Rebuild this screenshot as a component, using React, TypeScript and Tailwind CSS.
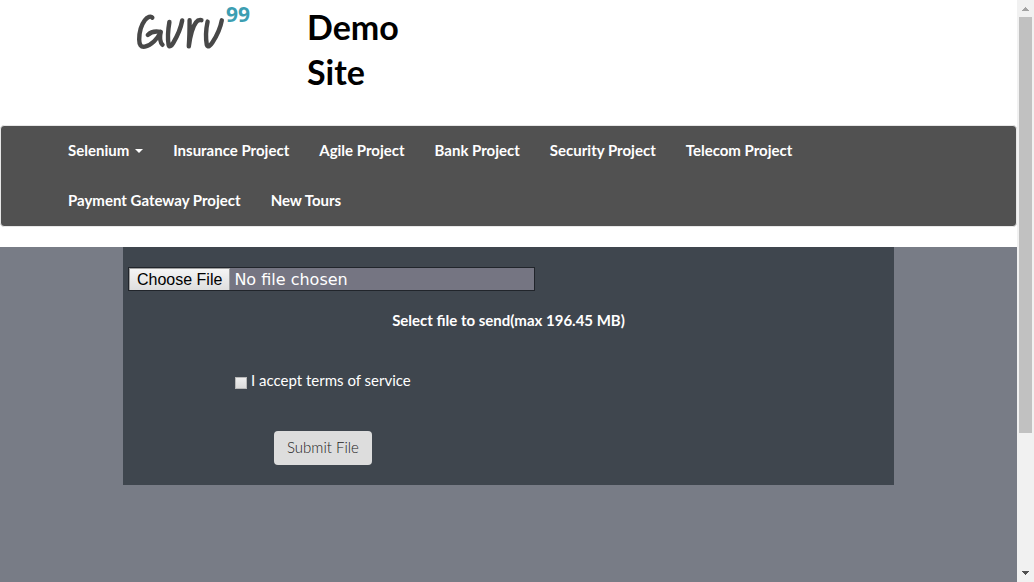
import { useState } from "react";

const links = [
  "Insurance Project",
  "Agile Project",
  "Bank Project",
  "Security Project",
  "Telecom Project",
  "Payment Gateway Project",
  "New Tours",
];

function Logo() {
  return (
    <a href="#" aria-label="Guru 99" className="block">
      <svg width="116" height="50" viewBox="0 0 116 50" role="img" aria-hidden="true">
        <g fill="none" stroke="#484848" strokeWidth="4.4" strokeLinecap="round" strokeLinejoin="round">
          <path d="M15.3 17.6C14 15.8 10.5 16.5 7.8 20.2C4.2 25 2.2 32.5 2.2 39.5C2.2 45 4 47.2 7.8 46.6C14.5 45.2 20.8 38.5 23.6 32C18.8 31 13.5 32.2 10.8 35" />
          <path d="M23.6 32C22.6 37.5 23.2 42.5 25.5 44.8" />
          <path d="M32.4 22C31 30 30.6 39 31.6 45C32.2 47.6 34.4 46 36.2 43C40.4 36 43.8 28 45.2 20.5" />
          <path d="M52.6 20.3C52.6 29 52.4 38 51.8 46.4C53 37.5 55.4 27 59 22.4C60.5 20.4 62.4 19.8 64.4 20.2" />
          <path d="M70.6 21.6C69 29 68.8 39 69.8 44.8C70.8 48 73.4 45.6 75.4 42.5C79.6 36 83.4 28 84.8 20.3" />
        </g>
        <text
          x="89"
          y="22"
          fill="#3c9eb2"
          fontSize="21"
          fontWeight="700"
          fontFamily="'Open Sans', sans-serif"
        >
          99
        </text>
      </svg>
    </a>
  );
}

function ScrollRail() {
  return (
    <div aria-hidden="true" className="flex w-[17px] shrink-0 flex-col items-center bg-[#f1f1f1]">
      <svg width="17" height="17" viewBox="0 0 17 17" shapeRendering="crispEdges" className="shrink-0">
        <path d="M8 7h1v1h1v1h1v1h1v1H5v-1h1V9h1V8h1z" fill="#a3a3a3" />
      </svg>
      <div className="flex w-[13px] grow flex-col">
        <div className="basis-[76%] bg-[#c1c1c1]" />
      </div>
      <svg width="17" height="17" viewBox="0 0 17 17" shapeRendering="crispEdges" className="shrink-0">
        <path d="M5 6h7v1h-1v1h-1v1H9v1H8V9H7V8H6V7H5z" fill="#505050" />
      </svg>
    </div>
  );
}

export default function App() {
  const [accepted, setAccepted] = useState(false);

  return (
    <div className="flex h-screen overflow-hidden bg-white font-[Lato,sans-serif] text-[15px] leading-5">
      <div className="flex min-w-0 grow flex-col">
        <header className="flex h-[125px] shrink-0 gap-[54px] pl-[137px]">
          <Logo />
          <h1 className="w-[110px] pt-1 text-[34px] leading-[45px] font-bold text-black">Demo Site</h1>
        </header>

        <nav className="mb-5 shrink-0 rounded-[4px] border border-[#e7e7e7] bg-[#515151] px-[52px]">
          <ul className="flex flex-wrap font-bold text-white">
            <li>
              <button type="button" aria-haspopup="true" className="flex h-[50px] items-center gap-[6px] px-[15px] pb-[2px]">
                Selenium
                <svg width="8" height="4" viewBox="0 0 8 4" fill="currentColor" aria-hidden="true" className="mt-[2px]">
                  <path d="M0 0h8L4 4z" />
                </svg>
              </button>
            </li>
            {links.map((name) => (
              <li key={name}>
                <a href="#" className="flex h-[50px] items-center px-[15px] pb-[2px]">
                  {name}
                </a>
              </li>
            ))}
          </ul>
        </nav>

        <main className="grow bg-[#787c86]">
          <form
            className="mx-auto w-full max-w-[771px] bg-[#3f464e] px-[5px] py-5 text-white"
            onSubmit={(event) => event.preventDefault()}
          >
            <input
              id="upload"
              type="file"
              className="block h-6 w-[407px] max-w-full border border-[#21252b] bg-[#757582] font-['DejaVu_Sans',sans-serif] text-[16px] leading-[22px] text-white file:mr-1 file:h-6 file:border file:border-solid file:border-[#a0a0a0] file:bg-linear-to-b file:from-[#f5f5f5] file:to-[#dddddd] file:px-[7px] file:font-['Liberation_Sans',sans-serif] file:text-[16px] file:leading-5 file:text-black"
            />
            <label htmlFor="upload" className="mt-[19px] block text-center font-bold">
              Select file to send(max 196.45 MB)
            </label>
            <div className="mt-10 flex items-center gap-1 pl-[107px]">
              <input
                id="terms"
                type="checkbox"
                checked={accepted}
                onChange={(event) => setAccepted(event.target.checked)}
                className="mt-[6px] size-3 appearance-none border border-[#b8b8b8] bg-linear-to-b from-[#eeeeee] to-[#dcdcdc] checked:bg-[#3c9eb2]"
              />
              <label htmlFor="terms">I accept terms of service</label>
            </div>
            <button
              type="submit"
              className="mt-[41px] ml-[146px] block h-[34px] rounded-[4px] bg-[#dddddd] px-[13px] pb-[2px] font-light text-[#222222]"
            >
              Submit File
            </button>
          </form>
        </main>
      </div>
      <ScrollRail />
    </div>
  );
}
